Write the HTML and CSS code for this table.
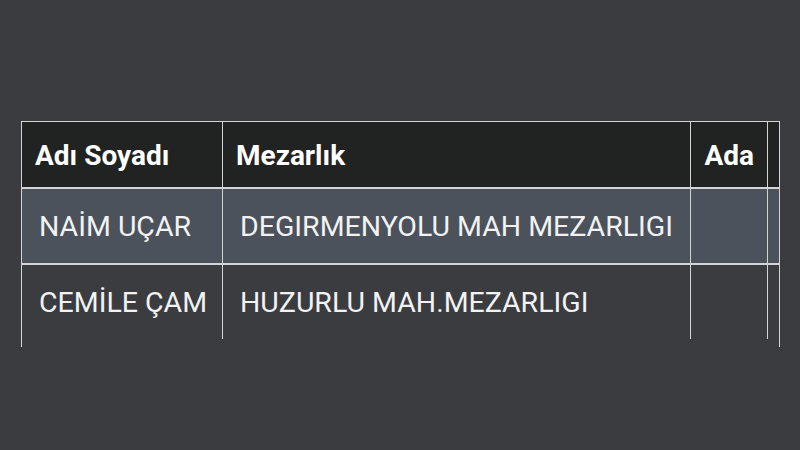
FILE: index.html
```html
<!DOCTYPE html>
<html lang="tr">
<head>
<meta charset="utf-8">
<link rel="stylesheet" href="styles.css">
</head>
<body>
<div class="page">
  <div class="table-wrap">
    <div class="row head">
      <div class="cell">Adı Soyadı</div>
      <div class="cell">Mezarlık</div>
      <div class="cell num">Ada</div>
      <div class="cell last"></div>
    </div>
    <div class="row odd">
      <div class="cell">NAİM UÇAR</div>
      <div class="cell">DEGIRMENYOLU MAH MEZARLIGI</div>
      <div class="cell num"></div>
      <div class="cell last"></div>
    </div>
    <div class="row even">
      <div class="cell">CEMİLE ÇAM</div>
      <div class="cell">HUZURLU MAH.MEZARLIGI</div>
      <div class="cell num"></div>
      <div class="cell last"></div>
    </div>
  </div>
</div>
</body>
</html>
```

FILE: styles.css
```css
html, body {
  margin: 0;
  padding: 0;
  background: #3a3c40;
}
body {
  width: 800px;
  height: 450px;
  overflow: hidden;
  font-family: Roboto, "Noto Sans", sans-serif;
  color: #f2f2f2;
}
.page {
  padding-top: 121px;
  padding-left: 21px;
}
.table-wrap {
  width: 757px;
  border: 1px solid #d4d4d4;
  border-bottom: none;
  padding-bottom: 8px;
}
.row {
  display: grid;
  grid-template-columns: 201px 468px 77px 11px;
}
.cell {
  box-sizing: border-box;
  border-right: 1px solid #d4d4d4;
  display: flex;
  align-items: center;
  white-space: nowrap;
}
.cell.last {
  border-right: none;
}
.head {
  height: 65px;
  background: #212222;
  border-bottom: 2px solid #d4d4d4;
  font-weight: 700;
  font-size: 28px;
  color: #ffffff;
}
.head .cell {
  padding-left: 13px;
  padding-top: 2px;
}
.head .cell.num {
  justify-content: flex-end;
  padding-left: 0;
  padding-right: 13px;
}
.odd, .even {
  height: 74px;
  font-size: 28.5px;
}
.odd .cell, .even .cell {
  padding-left: 17px;
}
.odd {
  background: #4b525b;
  border-bottom: 2px solid #d4d4d4;
}
.even {
  background: #3a3c40;
}
```
